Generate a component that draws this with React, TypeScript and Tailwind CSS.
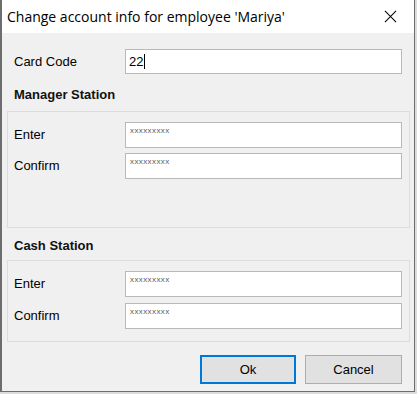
import React from 'react';

const font = { fontFamily: '"Liberation Sans", Arial, sans-serif' };

function PwdField() {
  return (
    <div className="w-[277px] h-[26px] bg-white border border-[#b9b9b9] pl-[4px] pt-[3px] flex items-start">
      <div className="text-[8px] leading-[9px] tracking-[0.4px] text-[#5c5c5c]">xxxxxxxxx</div>
    </div>
  );
}

function Row({ label, children }: { label: string; children: React.ReactNode }) {
  return (
    <div className="flex items-center">
      <div className="w-[117px] pl-[6px] text-[13px] text-black">{label}</div>
      {children}
    </div>
  );
}

export default function App() {
  return (
    <div className="w-[417px] h-[394px] bg-[#dcdcdc]" style={font}>
      <div className="w-[415px] h-[392px] bg-[#f0f0f0] border-l-2 border-r border-b border-[#6d6d6d] flex flex-col">
        {/* Title bar */}
        <div className="h-[33px] bg-white flex items-center justify-between pl-[5px] pr-[17px]">
          <span className="text-[14px] text-black" style={{ fontFamily: '"Open Sans", "Noto Sans", sans-serif' }}>
            Change account info for employee 'Mariya'
          </span>
          <svg width="13" height="13" viewBox="0 0 14 14" className="text-black">
            <path d="M1 1 L13 13 M13 1 L1 13" stroke="currentColor" strokeWidth="1.1" />
          </svg>
        </div>

        {/* Body */}
        <div className="pl-[5px] pr-[4px] flex flex-col">
          <div className="mt-[16px] flex items-center">
            <div className="w-[118px] pl-[7px] text-[13px] text-black">Card Code</div>
            <div className="w-[277px] h-[25px] bg-white border border-[#b9b9b9] pl-[3px] flex items-center text-[13px] text-black">
              22<span className="w-px h-[15px] bg-black ml-px" />
            </div>
          </div>

          <div className="mt-[13px] h-[16px] pl-[7px] text-[13px] font-bold text-[#111] leading-[16px]">Manager Station</div>
          <div className="mt-[8px] h-[117px] border border-[#dcdcdc] pt-[10px] flex flex-col gap-[5px]">
            <Row label="Enter"><PwdField /></Row>
            <Row label="Confirm"><PwdField /></Row>
          </div>

          <div className="mt-[10px] h-[16px] pl-[7px] text-[13px] font-bold text-[#111] leading-[16px]">Cash Station</div>
          <div className="mt-[6px] h-[82px] border border-[#dcdcdc] pt-[10px] flex flex-col gap-[6px]">
            <Row label="Enter"><PwdField /></Row>
            <Row label="Confirm"><PwdField /></Row>
          </div>

          <div className="mt-[13px] flex justify-end gap-[9px] pr-[8px]">
            <button className="w-[96px] h-[29px] bg-[#e1e1e1] border-2 border-[#0078d7] text-[13px] text-black">Ok</button>
            <button className="w-[97px] h-[29px] bg-[#e1e1e1] border border-[#adadad] text-[13px] text-black">Cancel</button>
          </div>
        </div>
      </div>
    </div>
  );
}
